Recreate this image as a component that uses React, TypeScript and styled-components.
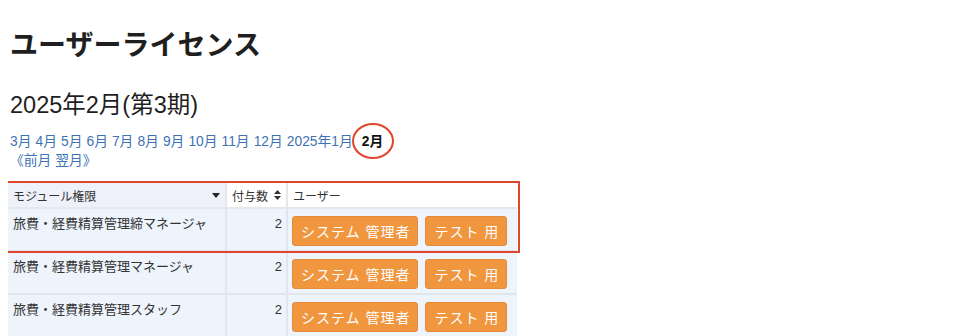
import React from 'react';
import styled, { createGlobalStyle } from 'styled-components';

const GlobalStyle = createGlobalStyle`
  body {
    margin: 8px;
    background: #ffffff;
    color: #222222;
    font-family: 'Liberation Sans', 'Noto Sans CJK JP', sans-serif;
  }
`;

const Page = styled.div`
  display: flex;
  flex-direction: column;
  align-items: flex-start;
`;

const Title = styled.h1`
  margin: 21px 0 0 2px;
  font-size: 28px;
  line-height: 34px;
  font-weight: bold;
  color: #1f1f1f;
`;

const Period = styled.h2`
  margin: 28px 0 0 2px;
  font-size: 23.5px;
  line-height: 29px;
  font-weight: normal;
  color: #1f1f1f;
`;

const MonthNav = styled.div`
  margin: 12px 0 0 2px;
  font-size: 13.8px;
  line-height: 19px;
  color: #3d72b4;
`;

const MonthLink = styled.a`
  color: #3d72b4;
  text-decoration: none;
  margin-right: 4px;
  cursor: pointer;
`;

// current month, circled in red
const Current = styled.span`
  position: relative;
  display: inline-block;
  margin-left: 5px;
  font-weight: bold;
  color: #111111;

  &::after {
    content: '';
    position: absolute;
    left: -10px;
    top: -9px;
    width: 38px;
    height: 32px;
    border: 2px solid #e0452d;
    border-radius: 50%;
  }
`;

const TableWrap = styled.div`
  position: relative;
  margin-top: 13px;
`;

// red annotation frame over header + first row
const Highlight = styled.div`
  position: absolute;
  left: -2px;
  top: -2px;
  width: 510px;
  height: 68px;
  border: 2px solid #e0452d;
  pointer-events: none;
`;

const Table = styled.table`
  border-collapse: collapse;
  table-layout: fixed;
  width: 509px;
  font-size: 13px;
  color: #333333;
`;

const Th = styled.th<{ $tint?: boolean; $w: number }>`
  width: ${(p) => p.$w}px;
  height: 25px;
  padding: 0 5px;
  box-sizing: border-box;
  text-align: left;
  font-weight: normal;
  font-size: 12px;
  color: #333333;
  background: ${(p) => (p.$tint ? '#eef0fa' : '#ffffff')};
  border-right: 2px solid #e4e7ec;
  border-bottom: 2px solid #e4e7ec;
  &:last-child {
    border-right: none;
  }
`;

const HeadInner = styled.div`
  display: flex;
  align-items: center;
  justify-content: space-between;
`;

const Td = styled.td<{ $num?: boolean }>`
  height: 43px;
  box-sizing: border-box;
  vertical-align: top;
  padding: ${(p) => (p.$num ? '6px 4px 0 5px' : '6px 5px 0 5px')};
  text-align: ${(p) => (p.$num ? 'right' : 'left')};
  line-height: 18px;
  background: #eef4fc;
  border-right: 2px solid #e2e6ec;
  border-bottom: 2px solid #e2e6ec;
  &:last-child {
    border-right: none;
  }
`;

const UserCell = styled.td`
  height: 43px;
  box-sizing: border-box;
  vertical-align: top;
  padding: 7px 4px 0 4px;
  background: #eef4fc;
  border-bottom: 2px solid #e2e6ec;
`;

const Users = styled.div`
  display: flex;
  gap: 7px;
`;

const UserButton = styled.button`
  height: 30px;
  padding: 0 7px 0 8px;
  border: 1px solid #e58a3c;
  border-radius: 3px;
  background: #f0963f;
  color: #ffffff;
  font-family: 'Liberation Sans', 'Noto Sans CJK JP', sans-serif;
  font-size: 14px;
  letter-spacing: 1px;
  white-space: pre;
  cursor: pointer;
`;

const Caret = () => (
  <svg width="8" height="5" viewBox="0 0 8 5">
    <path d="M0 0h8L4 5z" fill="#222" />
  </svg>
);

const SortIcon = () => (
  <svg width="7" height="10" viewBox="0 0 7 10" style={{ marginLeft: 3 }}>
    <path d="M0 4L3.5 0L7 4z M0 6h7L3.5 10z" fill="#333" />
  </svg>
);

const months = ['3月', '4月', '5月', '6月', '7月', '8月', '9月', '10月', '11月', '12月', '2025年1月'];

const rows = [
  { module: '旅費・経費精算管理締マネージャ', count: 2, users: ['システム 管理者', 'テスト 用'] },
  { module: '旅費・経費精算管理マネージャ', count: 2, users: ['システム 管理者', 'テスト 用'] },
  { module: '旅費・経費精算管理スタッフ', count: 2, users: ['システム 管理者', 'テスト 用'] },
];

export default function App() {
  return (
    <Page>
      <GlobalStyle />
      <Title>ユーザーライセンス</Title>
      <Period>2025年2月(第3期)</Period>
      <MonthNav>
        {months.map((m) => (
          <MonthLink key={m}>{m}</MonthLink>
        ))}
        <Current>2月</Current>
        <br />
        <MonthLink>《前月 翌月》</MonthLink>
      </MonthNav>
      <TableWrap>
        <Table>
          <thead>
            <tr>
              <Th $tint $w={218}>
                <HeadInner>
                  <span>モジュール権限</span>
                  <Caret />
                </HeadInner>
              </Th>
              <Th $w={61}>
                <HeadInner>
                  <span>付与数</span>
                  <SortIcon />
                </HeadInner>
              </Th>
              <Th $w={230}>ユーザー</Th>
            </tr>
          </thead>
          <tbody>
            {rows.map((r) => (
              <tr key={r.module}>
                <Td>{r.module}</Td>
                <Td $num>{r.count}</Td>
                <UserCell>
                  <Users>
                    {r.users.map((u) => (
                      <UserButton key={u}>{u}</UserButton>
                    ))}
                  </Users>
                </UserCell>
              </tr>
            ))}
          </tbody>
        </Table>
        <Highlight />
      </TableWrap>
    </Page>
  );
}
